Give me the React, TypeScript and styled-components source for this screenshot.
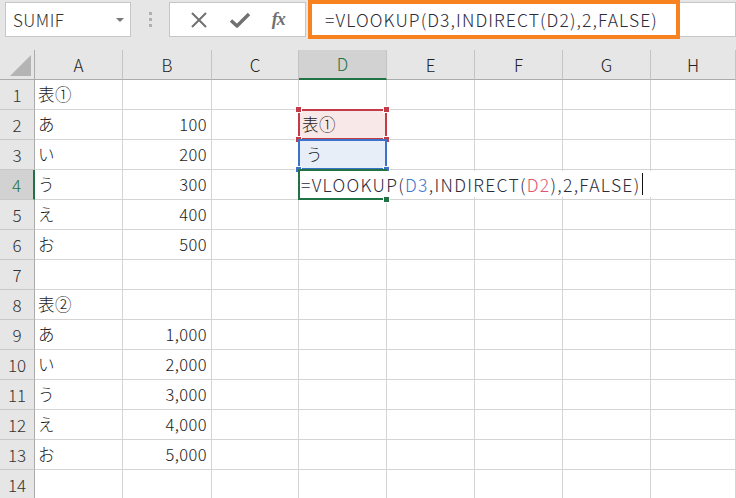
import React from "react";
import styled, { createGlobalStyle, css } from "styled-components";

const GlobalStyle = createGlobalStyle`
  html, body {
    margin: 0;
    padding: 0;
    background: #e6e6e6;
    overflow: hidden;
  }
  body {
    font-family: "Noto Sans CJK JP", "Noto Sans", sans-serif;
    color: #1f1f1f;
  }
`;

const Page = styled.div`
  width: 736px;
  height: 498px;
  overflow: hidden;
  background: #e6e6e6;
`;

/* ---------- toolbar ---------- */

const Toolbar = styled.div`
  height: 50px;
  display: flex;
  align-items: flex-start;
  padding-left: 5px;
  box-sizing: border-box;
`;

const NameBox = styled.div`
  margin-top: 2px;
  width: 126px;
  height: 35px;
  box-sizing: border-box;
  background: #fff;
  border: 1px solid #c6c6c6;
  display: flex;
  align-items: center;
  justify-content: space-between;
  padding: 0 6px 0 7px;
  font-size: 17px;
  font-weight: 300;
  letter-spacing: 0.5px;
  color: #333;
`;

const DropArrow = styled.span`
  width: 0;
  height: 0;
  border-left: 4px solid transparent;
  border-right: 4px solid transparent;
  border-top: 4px solid #777;
`;

const Grip = styled.div`
  width: 38px;
  height: 39px;
  display: flex;
  flex-direction: column;
  align-items: center;
  justify-content: center;
  gap: 3px;
  span {
    width: 3px;
    height: 3px;
    background: #b0b0b0;
  }
`;

const ButtonBox = styled.div`
  margin-top: 2px;
  width: 137px;
  height: 35px;
  box-sizing: border-box;
  background: #fff;
  border: 1px solid #c6c6c6;
  display: flex;
  align-items: center;
  justify-content: space-around;
  padding: 0 10px;
`;

const FxText = styled.span`
  font-family: "Liberation Serif", serif;
  font-style: italic;
  font-weight: bold;
  font-size: 18px;
  color: #707070;
  letter-spacing: -1px;
`;

const FormulaArea = styled.div`
  flex: 1;
  display: flex;
  align-items: flex-start;
  margin-left: 2px;
`;

const Highlight = styled.div`
  width: 372px;
  height: 39px;
  box-sizing: border-box;
  border: 4px solid #f7821f;
  background: #fff;
  display: flex;
  align-items: center;
  padding-left: 13px;
  font-size: 17.5px;
  font-weight: 300;
  letter-spacing: 1.1px;
  color: #2b2b3a;
  white-space: nowrap;
`;

const FormulaRest = styled.div`
  flex: 1;
  margin-top: 2px;
  height: 35px;
  box-sizing: border-box;
  background: #fff;
  border: 1px solid #c6c6c6;
  border-left: none;
`;

/* ---------- sheet ---------- */

const Sheet = styled.div`
  display: grid;
  grid-template-columns: 35px 88px 89px 87px 88px 88px 88px 88px 85px;
  grid-auto-rows: 30px;
  background: #fff;
`;

const CornerCell = styled.div`
  background: #e6e6e6;
  border-right: 1px solid #ababab;
  border-bottom: 1px solid #ababab;
  position: relative;
  &::after {
    content: "";
    position: absolute;
    right: 3px;
    bottom: 3px;
    width: 0;
    height: 0;
    border-left: 21px solid transparent;
    border-bottom: 21px solid #b4b4b4;
  }
`;

const ColHead = styled.div<{ $active?: boolean }>`
  background: ${(p) => (p.$active ? "#d2d2d2" : "#e6e6e6")};
  border-right: 1px solid #c4c4c4;
  border-bottom: ${(p) => (p.$active ? "2px solid #217346" : "1px solid #ababab")};
  display: flex;
  align-items: center;
  justify-content: center;
  font-size: 17px;
  font-weight: 300;
  color: ${(p) => (p.$active ? "#217346" : "#222")};
  padding-bottom: 1px;
  box-sizing: border-box;
`;

const RowHead = styled.div<{ $active?: boolean }>`
  background: ${(p) => (p.$active ? "#d2d2d2" : "#e6e6e6")};
  border-right: ${(p) => (p.$active ? "2px solid #217346" : "1px solid #ababab")};
  border-bottom: 1px solid #c8c8c8;
  display: flex;
  align-items: center;
  justify-content: center;
  font-size: 17px;
  font-weight: 300;
  color: ${(p) => (p.$active ? "#217346" : "#333")};
  box-sizing: border-box;
`;

type Mark = "red" | "blue" | "green";

const markColors: Record<Mark, { line: string; fill: string }> = {
  red: { line: "#c23b47", fill: "#f9e8e8" },
  blue: { line: "#3c73c8", fill: "#e8eef8" },
  green: { line: "#217346", fill: "#fff" },
};

const Cell = styled.div<{ $right?: boolean; $mark?: Mark; $indent?: number }>`
  position: relative;
  border-right: 1px solid #d4d4d4;
  border-bottom: 1px solid #d4d4d4;
  display: flex;
  align-items: center;
  justify-content: ${(p) => (p.$right ? "flex-end" : "flex-start")};
  padding: 0 4px 1px ${(p) => p.$indent ?? 3}px;
  font-size: 16.5px;
  font-weight: 300;
  letter-spacing: 0.4px;
  color: #1a1a1a;
  white-space: nowrap;
  box-sizing: border-box;
  background: ${(p) => (p.$mark ? markColors[p.$mark].fill : "#fff")};
  ${(p) =>
    p.$mark &&
    css`
      z-index: ${p.$mark === "green" ? 3 : 2};
      &::before {
        content: "";
        position: absolute;
        top: -1px;
        left: -1px;
        right: -1px;
        bottom: -1px;
        border: 2px solid ${markColors[p.$mark].line};
        pointer-events: none;
      }
    `}
`;

const Handle = styled.span<{ $color: string; $x: "l" | "r"; $y: "t" | "b" }>`
  position: absolute;
  width: 5px;
  height: 5px;
  background: ${(p) => p.$color};
  border: 1px solid #fff;
  z-index: 3;
  ${(p) => (p.$x === "l" ? "left: -4px;" : "right: -4px;")}
  ${(p) => (p.$y === "t" ? "top: -4px;" : "bottom: -4px;")}
`;

const EditText = styled.span`
  position: relative;
  z-index: 4;
  background: #fff;
  padding-right: 8px;
  margin-left: -1px;
  height: 26px;
  display: flex;
  align-items: center;
  font-size: 17.5px;
  letter-spacing: 1.3px;
  color: #2b2b3a;
`;

const Caret = styled.span`
  display: inline-block;
  width: 1px;
  height: 22px;
  background: #111;
  margin-left: 1px;
`;

const Ref = styled.span<{ $c: string }>`
  color: ${(p) => p.$c};
`;

const cols = ["A", "B", "C", "D", "E", "F", "G", "H"];

const data: Record<number, [string, string]> = {
  1: ["表①", ""],
  2: ["あ", "100"],
  3: ["い", "200"],
  4: ["う", "300"],
  5: ["え", "400"],
  6: ["お", "500"],
  7: ["", ""],
  8: ["表②", ""],
  9: ["あ", "1,000"],
  10: ["い", "2,000"],
  11: ["う", "3,000"],
  12: ["え", "4,000"],
  13: ["お", "5,000"],
  14: ["", ""],
};

function Formula({ caret }: { caret?: boolean }) {
  return (
    <>
      =VLOOKUP(<Ref $c={caret ? "#3f78cf" : "inherit"}>D3</Ref>,INDIRECT(
      <Ref $c={caret ? "#e25470" : "inherit"}>D2</Ref>),2,FALSE)
      {caret && <Caret />}
    </>
  );
}

function DCell({ row }: { row: number }) {
  if (row === 2) {
    const c = markColors.red.line;
    return (
      <Cell $mark="red">
        表①
        <Handle $color={c} $x="l" $y="t" />
        <Handle $color={c} $x="r" $y="t" />
        <Handle $color={c} $x="l" $y="b" />
        <Handle $color={c} $x="r" $y="b" />
      </Cell>
    );
  }
  if (row === 3) {
    const c = markColors.blue.line;
    return (
      <Cell $mark="blue" $indent={7}>
        う
        <Handle $color={c} $x="l" $y="b" />
        <Handle $color={c} $x="r" $y="b" />
      </Cell>
    );
  }
  if (row === 4) {
    return (
      <Cell $mark="green">
        <EditText>
          <Formula caret />
        </EditText>
        <Handle $color={markColors.green.line} $x="r" $y="b" />
      </Cell>
    );
  }
  return <Cell />;
}

function CheckIcon() {
  return (
    <svg width="22" height="18" viewBox="0 0 22 18">
      <path d="M2 9.5 L8 15 L20 3" fill="none" stroke="#707070" strokeWidth="3.4" strokeLinejoin="round" />
    </svg>
  );
}

function CrossIcon() {
  return (
    <svg width="18" height="18" viewBox="0 0 18 18">
      <path d="M2 2 L16 16 M16 2 L2 16" fill="none" stroke="#707070" strokeWidth="2" />
    </svg>
  );
}

export default function App() {
  const rows = Array.from({ length: 14 }, (_, i) => i + 1);
  return (
    <Page>
      <GlobalStyle />
      <Toolbar>
        <NameBox>
          SUMIF
          <DropArrow />
        </NameBox>
        <Grip>
          <span />
          <span />
          <span />
        </Grip>
        <ButtonBox>
          <CrossIcon />
          <CheckIcon />
          <FxText>fx</FxText>
        </ButtonBox>
        <FormulaArea>
          <Highlight>
            <Formula />
          </Highlight>
          <FormulaRest />
        </FormulaArea>
      </Toolbar>
      <Sheet>
        <CornerCell />
        {cols.map((c) => (
          <ColHead key={c} $active={c === "D"}>
            {c}
          </ColHead>
        ))}
        {rows.map((r) => (
          <React.Fragment key={r}>
            <RowHead $active={r === 4}>{r}</RowHead>
            <Cell>{data[r][0]}</Cell>
            <Cell $right>{data[r][1]}</Cell>
            <Cell />
            <DCell row={r} />
            <Cell />
            <Cell />
            <Cell />
            <Cell />
          </React.Fragment>
        ))}
      </Sheet>
    </Page>
  );
}
